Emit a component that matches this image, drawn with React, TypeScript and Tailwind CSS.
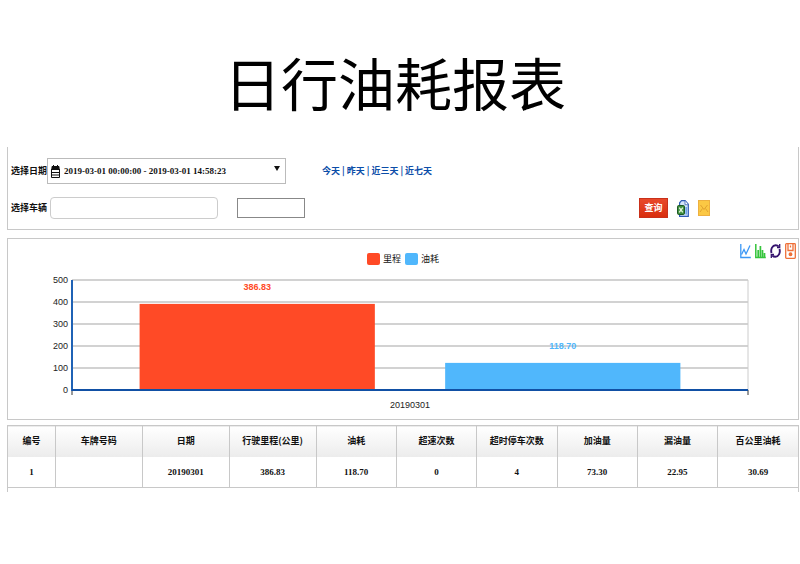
import React, { useState } from "react";

const BARS = [
  { name: "里程", value: 386.83, color: "#ff4a26", x: "10%", mid: "27.4%" },
  { name: "油耗", value: 118.7, color: "#50b7fc", x: "55.2%", mid: "72.6%" },
];

const TICKS = [500, 400, 300, 200, 100, 0];
const PLOT_HEIGHT = 110;

const COLUMNS = [
  { title: "编号", width: "w-[6%]" },
  { title: "车牌号码", width: "w-[11%]" },
  { title: "日期", width: "w-[11%]" },
  { title: "行驶里程(公里)", width: "w-[11%]" },
  { title: "油耗", width: "w-auto" },
  { title: "超速次数", width: "w-auto" },
  { title: "超时停车次数", width: "w-auto" },
  { title: "加油量", width: "w-auto" },
  { title: "漏油量", width: "w-auto" },
  { title: "百公里油耗", width: "w-auto" },
];

const ROWS = [["1", "", "20190301", "386.83", "118.70", "0", "4", "73.30", "22.95", "30.69"]];

const yOf = (value: number) => PLOT_HEIGHT - (value / 500) * PLOT_HEIGHT;

function CalendarIcon() {
  return (
    <svg className="w-[9px] h-[13px]" viewBox="0 0 9 13" fill="none" stroke="#111" aria-hidden="true">
      <path d="M.5 4v8.500h8V4z" fill="#fff" />
      <path d="M1 1.500h7v3H1z" fill="#111" />
      <path d="M2.500 0v2M6.500 0v2M1 7.500h7M1 10h7" />
    </svg>
  );
}

function ExcelIcon() {
  return (
    <svg className="w-3 h-[17px]" viewBox="0 0 12 17" aria-hidden="true">
      <path d="M4.500.7h3.600l3.200 3.600v12H2.600V2.800z" fill="#d3e5fb" stroke="#2f5cb8" strokeWidth="1.200" />
      <path d="M8 .7v4h3.300" fill="#fff" stroke="#3a63b5" strokeWidth=".8" />
      <path d="M9.200 7v7.500" stroke="#6fa5e8" strokeWidth="1.600" />
      <rect x=".5" y="5.500" width="7" height="9" rx="1.200" fill="#3f8f3f" stroke="#1c5723" />
      <path d="M2.200 7.600l3.600 4.800M5.800 7.600l-3.600 4.800" stroke="#e4f6dc" strokeWidth="1.400" />
    </svg>
  );
}

function MailIcon() {
  return (
    <svg className="w-3 h-4" viewBox="0 0 12 16" fill="none" aria-hidden="true">
      <rect x=".5" y=".5" width="11" height="15" fill="#fbc844" stroke="#edb040" />
      <path d="M2 12l2.500-3.500M10 12L7.500 8.500M2.500 5L6 9.500 9.500 5" stroke="#d9982b" strokeWidth=".8" />
    </svg>
  );
}

function LineIcon() {
  return (
    <svg className="w-[11px] h-4" viewBox="0 0 11 16" fill="none" stroke="#3b97f5" strokeWidth="1.300" aria-hidden="true">
      <path d="M.8 1v13.500h10" />
      <path d="M1.500 11.500L4 6.500l2 4.500 4-8.500" />
    </svg>
  );
}

function BarIcon() {
  return (
    <svg className="w-[11px] h-4" viewBox="0 0 11 16" fill="none" stroke="#35c43c" aria-hidden="true">
      <path d="M.8 1v13.500h10" strokeWidth="1.500" />
      <path d="M3.200 14V7M5.400 14V3M7.500 14V7M9.500 14v-4" strokeWidth="1.700" />
    </svg>
  );
}

function RefreshIcon() {
  return (
    <svg className="w-[11px] h-4" viewBox="0 0 11 16" fill="none" stroke="#35136e" strokeWidth="1.900" aria-hidden="true">
      <path d="M1.500 10C.4 6 2.500 2.200 5.600 2.200c1.300 0 2.400.5 3.200 1.500" />
      <path d="M9.500 6c1.100 4-1 7.800-4.100 7.800-1.300 0-2.400-.5-3.200-1.500" />
      <path d="M9.700 1v3.600H7M1.300 15v-3.600H4" strokeWidth="1.300" />
    </svg>
  );
}

function SaveIcon() {
  return (
    <svg className="w-[11px] h-4" viewBox="0 0 11 16" fill="none" stroke="#ee6f37" strokeWidth="1.300" aria-hidden="true">
      <rect x=".7" y=".7" width="9.600" height="14.600" rx=".8" />
      <path d="M3 1v6.500h5V1M5.500 2.500v2" />
      <circle cx="5.500" cy="11.300" r="1.300" fill="#ee6f37" />
    </svg>
  );
}

function Filters() {
  const [range, setRange] = useState("2019-03-01 00:00:00 - 2019-03-01 14:58:23");
  const [vehicle, setVehicle] = useState("");
  const [plate, setPlate] = useState("");

  return (
    <form onSubmit={(e) => e.preventDefault()} className="border-x border-b border-[#c8c8c8] pt-[11px] pb-[10px] pl-[3px] pr-[88px]">
      <div className="flex items-center">
        <label htmlFor="range" className="w-9 text-right font-bold whitespace-nowrap">选择日期</label>
        <div className="relative">
          <select
            id="range"
            value={range}
            onChange={(e) => setRange(e.target.value)}
            className="block w-[239px] h-[26px] pl-4 appearance-none border border-[#bbb] bg-white font-['Liberation_Serif',serif] font-bold"
          >
            <option>2019-03-01 00:00:00 - 2019-03-01 14:58:23</option>
          </select>
          <span className="pointer-events-none absolute inset-y-0 left-1 flex items-center"><CalendarIcon /></span>
          <svg className="pointer-events-none absolute right-[6px] top-2 w-[6px] h-[5px]" viewBox="0 0 6 5" aria-hidden="true">
            <path d="M0 0h6L3 5z" fill="#111" />
          </svg>
        </div>
        <nav className="ml-9 flex gap-[2px] font-bold text-[#0b4da8]">
          <a href="#today">今天</a>|
          <a href="#yesterday">昨天</a>|
          <a href="#three-days">近三天</a>|
          <a href="#seven-days">近七天</a>
        </nav>
      </div>
      <div className="mt-[13px] flex items-center">
        <label htmlFor="vehicle" className="w-9 text-right font-bold whitespace-nowrap">选择车辆</label>
        <input
          id="vehicle"
          value={vehicle}
          onChange={(e) => setVehicle(e.target.value)}
          className="ml-[3px] w-[168px] h-[22px] px-1 rounded border border-[#ccc] bg-white"
        />
        <input
          aria-label="车牌号码"
          value={plate}
          onChange={(e) => setPlate(e.target.value)}
          className="ml-[19px] w-[68px] h-5 px-1 border border-[#888] bg-white"
        />
        <div className="ml-auto flex items-center gap-[9px]">
          <button type="submit" className="w-[29px] h-5 border border-[#c9301a] bg-linear-to-b from-[#e8492a] to-[#d92d0c] font-bold text-white whitespace-nowrap">查询</button>
          <button type="button" aria-label="Excel"><ExcelIcon /></button>
          <button type="button" aria-label="邮件"><MailIcon /></button>
        </div>
      </div>
    </form>
  );
}

function Chart() {
  return (
    <section className="relative mt-2 border border-[#c8c8c8] pt-[14px] pb-[29px]">
      <div className="absolute right-[2px] top-1 flex gap-1">
        <button type="button" aria-label="折线图"><LineIcon /></button>
        <button type="button" aria-label="柱状图"><BarIcon /></button>
        <button type="button" aria-label="还原"><RefreshIcon /></button>
        <button type="button" aria-label="保存"><SaveIcon /></button>
      </div>
      <div className="flex h-3 items-center justify-center gap-1">
        {BARS.map((b) => (
          <span key={b.name} className="flex items-center gap-[3px]">
            <svg className="w-[13px] h-3" aria-hidden="true">
              <rect width="100%" height="100%" rx="2" fill={b.color} />
            </svg>
            {b.name}
          </span>
        ))}
      </div>
      <div className="ml-16 mr-[50px] mt-[15px]">
        <svg className="block w-full h-[110px] overflow-visible font-['Liberation_Sans',sans-serif]" role="img" aria-label="里程 油耗">
          {TICKS.map((t) => (
            <g key={t}>
              <line x1="0" x2="100%" y1={yOf(t)} y2={yOf(t)} stroke="#d2d2d2" strokeWidth="2" />
              <text x="-4" y={yOf(t) + 3} textAnchor="end" fill="#222">{t}</text>
            </g>
          ))}
          <line x1="100%" x2="100%" y1="0" y2="110" stroke="#ccc" />
          {BARS.map((b) => (
            <g key={b.name}>
              <rect x={b.x} y={yOf(b.value) - 1} width="34.8%" height={PLOT_HEIGHT - yOf(b.value) + 1} fill={b.color} />
              <text x={b.mid} y={yOf(b.value) - 15} textAnchor="middle" fontWeight="bold" fill={b.color}>{b.value.toFixed(2)}</text>
            </g>
          ))}
          <line x1="0" x2="0" y1="110" y2="115" stroke="#333" />
          <line x1="100%" x2="100%" y1="110" y2="115" stroke="#333" />
          <line x1="0" x2="0" y1="0" y2="111" stroke="#1f62b5" strokeWidth="2" />
          <line x1="0" x2="100%" y1="110" y2="110" stroke="#1150a5" strokeWidth="2" />
          <text x="50%" y="128" textAnchor="middle" fill="#222">20190301</text>
        </svg>
      </div>
    </section>
  );
}

function ReportTable() {
  return (
    <div className="mt-[5px] border-x border-[#c8c8c8] pb-1">
      <table className="w-full table-fixed border-collapse text-center">
        <thead>
          <tr className="h-[31px] border-t border-[#c8c8c8] bg-linear-to-b from-white to-[#ececec]">
            {COLUMNS.map((c) => (
              <th key={c.title} className={`${c.width} border-r border-[#c8c8c8] last:border-r-0 whitespace-nowrap`}>{c.title}</th>
            ))}
          </tr>
        </thead>
        <tbody>
          {ROWS.map((row) => (
            <tr key={row[0]} className="h-[31px] border-b border-[#c8c8c8] font-['Liberation_Serif',serif] font-bold">
              {row.map((cell, i) => (
                <td key={i} className="border-r border-[#c8c8c8] last:border-r-0">{cell}</td>
              ))}
            </tr>
          ))}
        </tbody>
      </table>
    </div>
  );
}

export default function App() {
  return (
    <main className="min-h-screen bg-white pl-[7px] pr-px font-['Noto_Sans_CJK_SC',sans-serif] text-[9px] leading-3 text-[#111]">
      <h1 className="pt-[46px] pb-[31px] pr-4 text-center text-[57px] font-normal leading-[70px] text-black">日行油耗报表</h1>
      <Filters />
      <Chart />
      <ReportTable />
    </main>
  );
}
